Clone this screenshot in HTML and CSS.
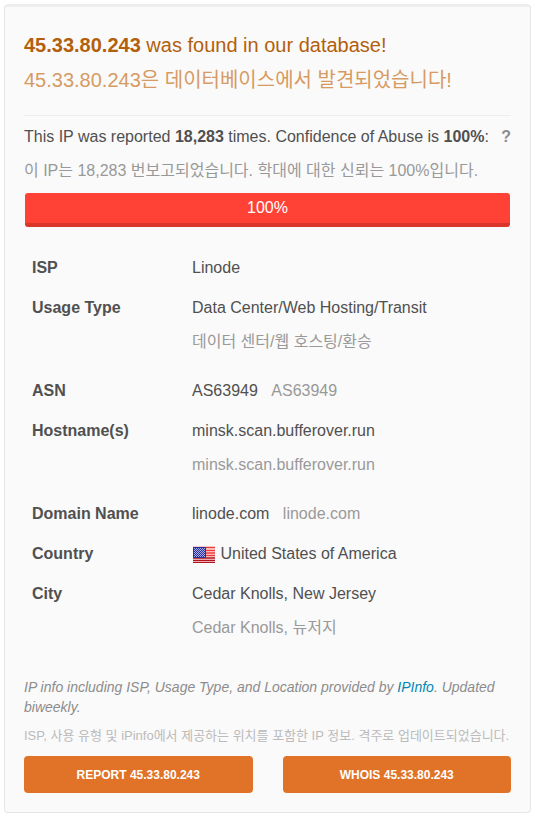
FILE: index.html
```
<!DOCTYPE html>
<html lang="en">
<head>
  <meta charset="UTF-8" />
  <meta name="viewport" content="width=device-width, initial-scale=1" />
  <title>45.33.80.243</title>
  <link rel="stylesheet" href="styles.css">
</head>
<body>
  <div class="well">
    <h3><b>45.33.80.243</b> was found in our database!</h3>
    <p class="subtitle" lang="ko">45.33.80.243은 데이터베이스에서 발견되었습니다!</p>

    <hr>

    <div class="summary">
      <p>This IP was reported <b>18,283</b> times. Confidence of Abuse is <b>100%</b>:</p>
      <b class="help">?</b>
    </div>
    <p class="translated" lang="ko">이 IP는 18,283 번보고되었습니다. 학대에 대한 신뢰는 100%입니다.</p>

    <div class="score">
      <div class="score-bar" style="width: 100%">100%</div>
    </div>

    <table class="details">
      <tr>
        <th scope="row">ISP</th>
        <td>Linode</td>
      </tr>
      <tr>
        <th scope="row">Usage Type</th>
        <td>
          Data Center/Web Hosting/Transit
          <p class="translated" lang="ko">데이터 센터/웹 호스팅/환승</p>
        </td>
      </tr>
      <tr>
        <th scope="row">ASN</th>
        <td>AS63949 <span class="translated inline">AS63949</span></td>
      </tr>
      <tr>
        <th scope="row">Hostname(s)</th>
        <td>
          minsk.scan.bufferover.run
          <p class="translated">minsk.scan.bufferover.run</p>
        </td>
      </tr>
      <tr>
        <th scope="row">Domain Name</th>
        <td>linode.com <span class="translated inline">linode.com</span></td>
      </tr>
      <tr>
        <th scope="row">Country</th>
        <td>
          <svg class="flag" viewBox="0 0 24 18" width="24" height="18" aria-hidden="true">
            <rect x="1" y="1" width="22" height="16" fill="#fbe3e0"/>
            <path d="M1 1.5h22M1 4.5h22M1 7h22M1 9.5h22" stroke="#ee3a3a" stroke-width="1.4"/>
            <path d="M1 12h22M1 14.3h22M1 16.4h22" stroke="#b3131c" stroke-width="1.3"/>
            <rect x="1" y="1" width="13" height="11" fill="#2a2f9c"/>
            <path d="M2 2.5h11M2 4.5h11M2 6.5h11M2 8.5h11M2 10.5h11" stroke="#aab0e4" stroke-width="1" stroke-dasharray="1 1"/>
            <path d="M3 3.5h10M3 5.5h10M3 7.5h10M3 9.5h10" stroke="#aab0e4" stroke-width="1" stroke-dasharray="1 1"/>
          </svg>
          United States of America
        </td>
      </tr>
      <tr>
        <th scope="row">City</th>
        <td>
          Cedar Knolls, New Jersey
          <p class="translated" lang="ko">Cedar Knolls, 뉴저지</p>
        </td>
      </tr>
    </table>

    <p class="note">IP info including ISP, Usage Type, and Location provided by <a href="#">IPInfo</a>. Updated biweekly.</p>
    <p class="note-translated" lang="ko">ISP, 사용 유형 및 iPinfo에서 제공하는 위치를 포함한 IP 정보. 격주로 업데이트되었습니다.</p>

    <div class="actions">
      <button type="button">REPORT 45.33.80.243</button>
      <button type="button">WHOIS 45.33.80.243</button>
    </div>
  </div>
</body>
</html>
```

FILE: styles.css
```
* {
  box-sizing: border-box;
}

body {
  margin: 0;
  padding: 4px;
  background: #fff;
  color: #505050;
  font-family: "Liberation Sans", "Noto Sans CJK KR", sans-serif;
  font-size: 16px;
  line-height: 34px;
}

h3, p {
  margin: 0;
}

.well {
  padding: 21px 19px 19px;
  background: #fafafa;
  border: 1px solid #e6e6e6;
  border-top: 3px solid #eee;
  border-radius: 4px;
}

h3,
.subtitle {
  font-size: 20px;
}

h3 {
  color: #b35f0c;
  font-weight: normal;
}

.subtitle {
  margin-top: 1px;
  color: #d79a63;
}

hr {
  margin: 18px 0 4px;
  border: 0;
  border-top: 1px solid #eee;
}

.summary {
  display: flex;
  justify-content: space-between;
}

.translated {
  color: #999;
}

.inline {
  margin-left: 9px;
}

.help {
  color: #8c8c8c;
}

.score {
  margin: 5px 1px 21px;
}

.score-bar {
  height: 34px;
  background: #ff4136;
  border-bottom: 4px solid #d9362c;
  border-radius: 3px;
  color: #fff;
  line-height: 30px;
  text-align: center;
}

.details {
  width: 100%;
  border-collapse: collapse;
}

.details th,
.details td {
  padding: 3px 8px;
  text-align: left;
  vertical-align: top;
}

.details th {
  width: 160px;
}

.details p {
  margin-bottom: 9px;
}

.flag {
  vertical-align: -5px;
}

.note {
  margin-top: 20px;
  color: #8c8c8c;
  font-size: 14px;
  font-style: italic;
  line-height: 20px;
}

.note a {
  color: #0088b5;
  text-decoration: none;
}

.note-translated {
  margin: 9px 0 10px;
  color: #bbb;
  font-size: 13px;
  line-height: 20px;
}

.actions {
  display: grid;
  grid-template-columns: 1fr 1fr;
  gap: 30px;
}

.actions button {
  height: 37px;
  padding: 0;
  background: #e07328;
  border: 0;
  border-radius: 4px;
  color: #fff;
  font-family: inherit;
  font-size: 12px;
  font-weight: bold;
  cursor: pointer;
}

.actions button:hover {
  background: #c9621c;
}
```
